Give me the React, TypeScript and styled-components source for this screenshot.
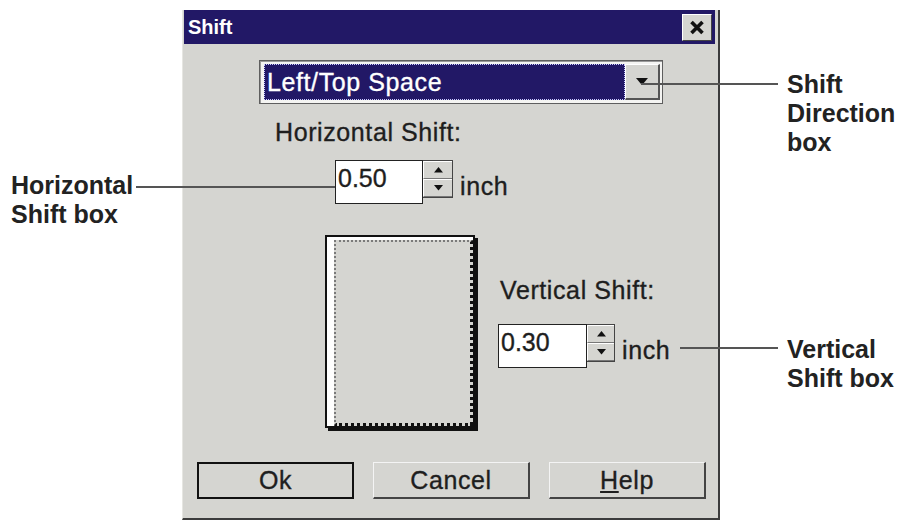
import styled, { createGlobalStyle } from "styled-components";

const GlobalStyle = createGlobalStyle`
  html, body {
    margin: 0;
    padding: 0;
    background: #ffffff;
  }
  body {
    font-family: "Liberation Sans", Arial, sans-serif;
    color: #1e1e1e;
  }
`;

const Stage = styled.div`
  position: relative;
  width: 903px;
  height: 526px;
  padding: 10px 0 0 182px;
  box-sizing: border-box;
  overflow: hidden;
`;

const Dialog = styled.div`
  width: 538px;
  height: 510px;
  box-sizing: border-box;
  background: #d5d5d1;
  border-left: 1px solid #e6e6e2;
  border-right: 2px solid #3c3c3c;
  border-bottom: 2px solid #3c3c3c;
  display: flex;
  flex-direction: column;
`;

const TitleBar = styled.div`
  height: 34px;
  margin: 0 3px 0 1px;
  padding: 0 3px 0 4px;
  background: #221866;
  display: flex;
  align-items: center;
  justify-content: space-between;
`;

const Title = styled.span`
  color: #ffffff;
  font-weight: 700;
  font-size: 20px;
`;

const CloseBtn = styled.div`
  width: 30px;
  height: 27px;
  box-sizing: border-box;
  background: #d5d5d1;
  border-top: 1px solid #ffffff;
  border-left: 1px solid #ffffff;
  border-right: 1px solid #444;
  border-bottom: 1px solid #444;
  display: flex;
  align-items: center;
  justify-content: center;
`;

const Combo = styled.div`
  margin: 16px 0 0 76px;
  width: 404px;
  height: 44px;
  box-sizing: border-box;
  border: 1px solid #5e5e5e;
  box-shadow: inset 1px 1px 0 #9a9a9a;
  background: #f4f4f2;
  padding: 3px 2px 3px 4px;
  display: flex;
`;

const ComboField = styled.div`
  flex: 1;
  background: #221866;
  color: #ffffff;
  font-size: 25px;
  letter-spacing: 0.6px;
  -webkit-text-stroke: 0.35px #ffffff;
  line-height: 36px;
  padding-left: 3px;
  outline: 1px dotted #c8c8ff;
  outline-offset: -1px;
`;

const DropBtn = styled.div`
  width: 35px;
  box-sizing: border-box;
  background: #d5d5d1;
  border-top: 1px solid #ffffff;
  border-left: 1px solid #ffffff;
  border-right: 2px solid #555;
  border-bottom: 2px solid #555;
  display: flex;
  align-items: center;
  justify-content: center;
`;

const FieldLabel = styled.div<{ $left: number; $top: number }>`
  margin: ${(p) => p.$top}px 0 0 ${(p) => p.$left}px;
  font-size: 25px;
  letter-spacing: 0.6px;
  -webkit-text-stroke: 0.35px #1e1e1e;
  line-height: 28px;
`;

const SpinRow = styled.div<{ $left: number; $top: number }>`
  margin: ${(p) => p.$top}px 0 0 ${(p) => p.$left}px;
  display: flex;
  align-items: flex-start;
`;

const SpinInput = styled.div<{ $width: number }>`
  width: ${(p) => p.$width}px;
  height: 44px;
  box-sizing: border-box;
  background: #ffffff;
  border: 1px solid #222;
  font-size: 25px;
  -webkit-text-stroke: 0.35px #1e1e1e;
  line-height: 28px;
  padding: 3px 0 0 2px;
`;

const Spinner = styled.div<{ $width: number }>`
  width: ${(p) => p.$width}px;
  height: 38px;
  display: flex;
  flex-direction: column;
  border: 1px solid #444;
  border-left: none;
  box-sizing: border-box;
`;

const SpinBtn = styled.div`
  flex: 1;
  background: #d5d5d1;
  border-top: 1px solid #ffffff;
  border-left: 1px solid #ffffff;
  border-bottom: 1px solid #777;
  display: flex;
  align-items: center;
  justify-content: center;
`;

const Unit = styled.span`
  margin-left: 7px;
  padding-top: 12px;
  font-size: 25px;
  letter-spacing: 0.6px;
  -webkit-text-stroke: 0.35px #1e1e1e;
  line-height: 28px;
`;

const Lower = styled.div`
  margin-top: 31px;
  display: flex;
  align-items: flex-start;
`;

const Page = styled.div`
  margin-left: 142px;
  width: 150px;
  height: 193px;
  box-sizing: border-box;
  border: 2px solid #111;
  box-shadow: 3px 3px 0 #111;
  background: #ffffff;
  padding: 3px 0 0 7px;
  display: flex;
`;

const PageInner = styled.div`
  flex: 1;
  background: #d5d5d1;
  border-top: 2px dotted #7a7a7a;
  border-left: 2px dotted #7a7a7a;
  border-right: 3px dotted #111;
  border-bottom: 3px dotted #111;
`;

const SideColumn = styled.div`
  margin-left: 25px;
  display: flex;
  flex-direction: column;
`;

const ButtonRow = styled.div`
  margin: 34px 0 0 14px;
  display: flex;
  gap: 19px;
`;

const DlgButton = styled.div<{ $default?: boolean }>`
  width: 157px;
  height: 37px;
  box-sizing: border-box;
  background: #d5d5d1;
  font-size: 25px;
  letter-spacing: 0.6px;
  -webkit-text-stroke: 0.35px #1e1e1e;
  display: flex;
  align-items: center;
  justify-content: center;
  ${(p) =>
    p.$default
      ? `border: 2px solid #111;`
      : `border-top: 1px solid #f4f4f4;
         border-left: 1px solid #f4f4f4;
         border-right: 2px solid #444;
         border-bottom: 2px solid #444;`}
`;

const Callout = styled.div<{ $x: number; $y: number }>`
  position: absolute;
  left: ${(p) => p.$x}px;
  top: ${(p) => p.$y}px;
  font-size: 25px;
  font-weight: 700;
  line-height: 29px;
  color: #222;
`;

const Leader = styled.div<{ $x: number; $y: number; $w: number }>`
  position: absolute;
  left: ${(p) => p.$x}px;
  top: ${(p) => p.$y}px;
  width: ${(p) => p.$w}px;
  height: 2px;
  background: #555;
`;

const Triangle = ({ up, size = 10 }: { up?: boolean; size?: number }) => (
  <svg width={size} height={size * 0.6} viewBox="0 0 10 6">
    <polygon points={up ? "0,6 10,6 5,0" : "0,0 10,0 5,6"} fill="#111" />
  </svg>
);

const Spin = ({
  value,
  left,
  top,
  inputWidth,
  spinWidth,
}: {
  value: string;
  left: number;
  top: number;
  inputWidth: number;
  spinWidth: number;
}) => (
  <SpinRow $left={left} $top={top}>
    <SpinInput $width={inputWidth}>{value}</SpinInput>
    <Spinner $width={spinWidth}>
      <SpinBtn>
        <Triangle up size={9} />
      </SpinBtn>
      <SpinBtn>
        <Triangle size={9} />
      </SpinBtn>
    </Spinner>
    <Unit>inch</Unit>
  </SpinRow>
);

export default function App() {
  return (
    <>
      <GlobalStyle />
      <Stage>
        <Dialog>
          <TitleBar>
            <Title>Shift</Title>
            <CloseBtn>
              <svg width="16" height="15" viewBox="0 0 16 15">
                <path d="M2.5 2 L13.5 13 M13.5 2 L2.5 13" stroke="#111" strokeWidth="3.6" />
              </svg>
            </CloseBtn>
          </TitleBar>

          <Combo>
            <ComboField>Left/Top Space</ComboField>
            <DropBtn>
              <Triangle size={12} />
            </DropBtn>
          </Combo>

          <FieldLabel $left={92} $top={14}>
            Horizontal Shift:
          </FieldLabel>
          <Spin value="0.50" left={152} top={14} inputWidth={88} spinWidth={30} />

          <Lower>
            <Page>
              <PageInner />
            </Page>
            <SideColumn>
              <FieldLabel $left={0} $top={41}>
                Vertical Shift:
              </FieldLabel>
              <Spin value="0.30" left={-2} top={20} inputWidth={89} spinWidth={28} />
            </SideColumn>
          </Lower>

          <ButtonRow>
            <DlgButton $default>Ok</DlgButton>
            <DlgButton>Cancel</DlgButton>
            <DlgButton>
              <span>
                <u>H</u>elp
              </span>
            </DlgButton>
          </ButtonRow>
        </Dialog>

        <Leader $x={641} $y={83} $w={137} />
        <Callout $x={787} $y={70}>
          Shift
          <br />
          Direction
          <br />
          box
        </Callout>

        <Leader $x={136} $y={186} $w={199} />
        <Callout $x={11} $y={171}>
          Horizontal
          <br />
          Shift box
        </Callout>

        <Leader $x={680} $y={347} $w={98} />
        <Callout $x={787} $y={335}>
          Vertical
          <br />
          Shift box
        </Callout>
      </Stage>
    </>
  );
}
